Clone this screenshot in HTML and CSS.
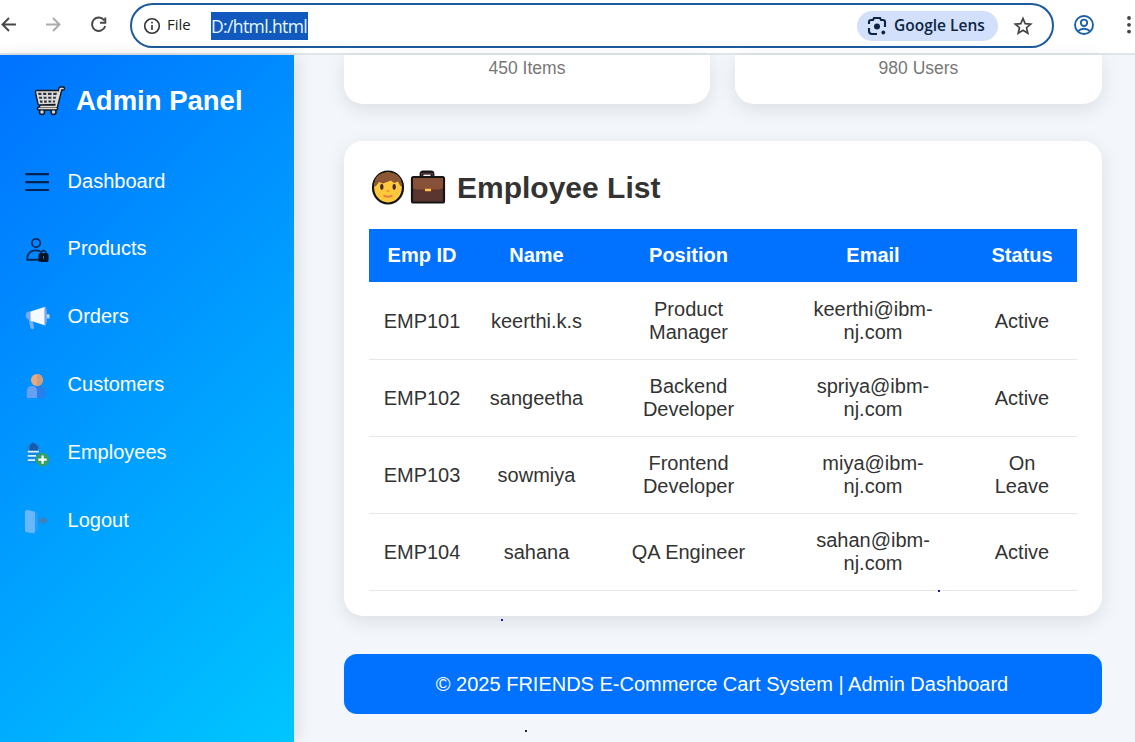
FILE: index.html
```html
<!DOCTYPE html>
<html lang="en">
<head>
<meta charset="utf-8">
<title>Admin Dashboard</title>
<link rel="stylesheet" href="styles.css">
</head>
<body>
<header class="browser">
  <svg class="nav-icons" width="112" height="50" viewBox="0 0 112 50" fill="none" stroke-width="1.9">
    <path d="M16 24.5H2.5M9 18l-6.5 6.5L9 31" stroke="#454749"/>
    <path d="M46 24.5h13.5M53 18l6.500 6.500L53 31" stroke="#a9abad"/>
    <path d="M104.300 20.500A6.700 6.700 0 1 0 105.200 26M105.300 17.500v5.200h-5.300" stroke="#454749"/>
  </svg>
  <div class="address">
    <svg class="info" width="18" height="18" viewBox="0 0 18 18" fill="none" stroke="#303234" stroke-width="1.6"><circle cx="9" cy="9" r="7.300"/><path d="M9 8v5M9 4.800v1.700"/></svg>
    <span class="scheme">File</span>
    <span class="url">D:/html.html</span>
    <div class="lens">
      <svg width="20" height="20" viewBox="0 0 20 20" fill="none" stroke="#0b2545" stroke-width="2.100"><path d="M2 8V6q0-2 2-2h2l1-2h6l1 2h2q2 0 2 2v5M2 12v3q0 3 3 3h5"/><circle cx="10" cy="10.500" r="3" fill="#0b2545" stroke="none"/><circle cx="16.300" cy="16.500" r="1.900" fill="#0b2545" stroke="none"/></svg>
      <span>Google Lens</span>
    </div>
    <svg class="star" width="20" height="20" viewBox="0 0 20 20" fill="none" stroke="#414345" stroke-width="1.700"><path d="m10 2.500 2.200 5.100 5.500.5-4.200 3.600 1.300 5.500L10 14.300l-4.800 2.900 1.300-5.500-4.200-3.600 5.500-.5z"/></svg>
  </div>
  <svg class="profile" width="22" height="22" viewBox="0 0 22 22" fill="none" stroke="#1c61a8" stroke-width="1.900"><circle cx="11" cy="11" r="9"/><circle cx="11" cy="8.800" r="3.200"/><path d="M4.700 17.200q6.300-5 12.600 0"/></svg>
  <svg class="more" width="6" height="20" viewBox="0 0 6 20" fill="#414345"><circle cx="3" cy="3" r="1.900"/><circle cx="3" cy="9.800" r="1.900"/><circle cx="3" cy="16.600" r="1.900"/></svg>
</header>

<div class="page">
  <nav class="sidebar">
    <h1 class="brand">
      <svg width="34" height="34" viewBox="0 0 34 34" fill="none" stroke-linejoin="round" stroke-linecap="round"><g stroke="#111820" stroke-width="4.500"><path d="M30 4.500h-2.500l-4.500 18H8M4 8h21l-2.500 11-16 .5z"/><circle cx="9" cy="28" r="1"/><circle cx="20.500" cy="28" r="1"/><path d="M6 24.500h17"/></g><path d="M4 8h21l-2.500 11-16 .5z" fill="#283742"/><path d="M30 4.500h-2.500l-4.500 18H8M4 8h21l-2.500 11-16 .5zM5 11.800h19M6 15.600h17M9 8l1.500 11M14 8l.7 11M19.500 8l-.5 11M6 24.500h17" stroke="#ded9d7" stroke-width="1.700"/><circle cx="9" cy="28" r="1.800" fill="#d5d0ce"/><circle cx="20.500" cy="28" r="1.800" fill="#d5d0ce"/></svg>
      <span>Admin Panel</span>
    </h1>
    <ul class="menu">
      <li><svg viewBox="0 0 28 28"><path d="M1.500 4.500h25.500M1.500 13h25.500M1.500 21.500h25.500" stroke="#052251" stroke-width="2.300"/></svg><span>Dashboard</span></li>
      <li><svg viewBox="0 0 28 28" fill="none" stroke="#06285b" stroke-width="1.900"><circle cx="13" cy="6.500" r="4.500"/><path d="M16 24.500H3.500V22Q5 14.500 13 14.500q4 0 6 2"/><path d="M18.500 19v-2.500q2.500-3.500 5 0V19"/><rect x="16.500" y="18.500" width="9" height="7.500" rx="1" fill="#071226" stroke="#071226"/><path d="M21 20.500v3" stroke="#4a7097" stroke-width="1"/></svg><span>Products</span></li>
      <li><svg viewBox="0 0 28 28"><path d="M5 15h4l2 10q-2 2-4 0z" fill="#74b0f4"/><path d="M8 7H5q-4 1-3 6 1 3 6 3z" fill="#76a6f5"/><path d="M7 7 23 2v20L7 17z" fill="#f5faff"/><path d="M22 1.500q3 1 3 10.500T22 22z" fill="#72a5ec"/><rect x="24.500" y="10" width="3" height="4.500" rx="1" fill="#b9dcfb"/></svg><span>Orders</span></li>
      <li><svg viewBox="0 0 28 28"><path d="M3 27v-7q0-6 6-6h8q6 0 6 6v7z" fill="#287eed"/><path d="M3 27v-7q0-6 6-6 5 0 5 6v7z" fill="#66a1f1"/><circle cx="14" cy="7.500" r="6.500" fill="#e5aa82"/><path d="M14 1a6.500 6.500 0 0 1 0 13z" fill="#cf9d7d"/></svg><span>Customers</span></li>
      <li><svg viewBox="0 0 28 28"><path d="M3 4h4q2-4 7 0h3v20H3z" fill="#1688e2"/><path d="M6 6q3-8 9 0v5H6z" fill="#175bae"/><path d="M4 11.500h12M4 16h9M4 20.500h8" stroke="#d9f4ff" stroke-width="1.900"/><circle cx="20" cy="20" r="7.300" fill="#32a166"/><path d="M20 15.500v9M15.500 20h9" stroke="#fff" stroke-width="2.400"/></svg><span>Employees</span></li>
      <li><svg viewBox="0 0 28 28"><path d="M3 1h1l8 2v22l-2 1-7-1q-2 0-2-2V3q0-2 2-2z" fill="#68b7fa"/><path d="M12 4h3v19l-3 2z" fill="#249cfa"/><path d="M16 10.500h4V7.500l6 5-6 5v-3h-4z" fill="#3d80bb"/></svg><span>Logout</span></li>
    </ul>
  </nav>

  <main class="content">
    <div class="stats">
      <div class="stat">450 Items</div>
      <div class="stat">980 Users</div>
    </div>
    <section class="employees">
      <h2 class="title">
        <svg width="75" height="36" viewBox="0 0 75 36"><ellipse cx="17" cy="18.500" rx="15" ry="16" fill="#ffc83d" stroke="#151515" stroke-width="2.200"/><path d="M3 17.500Q3 3.500 17 3.500t14 14l-2-1-2-4-4 1.500-3-2.500-8 3-4-1.500-3 4z" fill="#8b5635"/><ellipse cx="10.800" cy="18" rx="1.700" ry="2.900" fill="#402a32"/><ellipse cx="23.200" cy="18" rx="1.700" ry="2.900" fill="#402a32"/><path d="M15.500 22h3" stroke="#e6982c" stroke-width="1.600"/><path d="M12.500 26.500q4.500 2.500 9 0" fill="none" stroke="#e77845" stroke-width="1.800"/><g transform="translate(-1 0)"><path d="M51.500 9V5q0-1.500 1.500-1.500h8q1.500 0 1.500 1.500v4" fill="none" stroke="#151515" stroke-width="3.800"/><path d="M51.500 9V4.500h11V9" fill="none" stroke="#56352e" stroke-width="1.300"/><rect x="42" y="8" width="32" height="25.500" rx="1.500" fill="#5b352f" stroke="#151515" stroke-width="2.200"/><path d="M43 9h30v10q-3 1.500-5 1.500H48q-3 0-5-1.500z" fill="#865039"/><path d="M55 21h6" stroke="#ffc443" stroke-width="2.500"/></g></svg>
        <span>Employee List</span>
      </h2>
      <table class="table">
        <colgroup><col class="col-id"><col class="col-name"><col class="col-position"><col class="col-email"><col class="col-status"></colgroup>
        <thead><tr><th>Emp ID</th><th>Name</th><th>Position</th><th>Email</th><th>Status</th></tr></thead>
        <tbody>
          <tr><td>EMP101</td><td>keerthi.k.s</td><td>Product<br>Manager</td><td>keerthi@ibm-<br>nj.com</td><td>Active</td></tr>
          <tr><td>EMP102</td><td>sangeetha</td><td>Backend<br>Developer</td><td>spriya@ibm-<br>nj.com</td><td>Active</td></tr>
          <tr><td>EMP103</td><td>sowmiya</td><td>Frontend<br>Developer</td><td>miya@ibm-<br>nj.com</td><td>On<br>Leave</td></tr>
          <tr><td>EMP104</td><td>sahana</td><td>QA Engineer</td><td>sahan@ibm-<br>nj.com</td><td>Active</td></tr>
        </tbody>
      </table>
    </section>
    <footer class="footer">© 2025 FRIENDS E-Commerce Cart System | Admin Dashboard</footer>
  </main>
</div>
<i class="speck speck-table"></i><i class="speck speck-card"></i><i class="speck speck-bottom"></i>
</body>
</html>
```
FILE: styles.css
```css
* { box-sizing: border-box; }
body {
  margin: 0;
  height: 742px;
  overflow: hidden;
  display: flex;
  flex-direction: column;
  position: relative;
  background: #f3f6fb;
  color: #333;
  font: 20px/23px "Liberation Sans", Arial, sans-serif;
}
svg { display: block; flex: none; }
.browser {
  height: 55px;
  flex: none;
  display: flex;
  align-items: flex-start;
  background: #fff;
  border-bottom: 2px solid #e0e5e7;
  font-family: "Open Sans", "Noto Sans", sans-serif;
}
.address {
  width: 924px;
  height: 45px;
  margin: 3px 0 0 18px;
  padding: 0 19px 0 12px;
  border: 2px solid #1c5b9c;
  border-radius: 23px;
  display: flex;
  align-items: center;
}
.info { margin-left: -1px; }
.scheme { width: 25px; margin: -2px 0 0 6px; font-size: 15px; font-weight: 500; color: #222; white-space: nowrap; }
.url {
  width: 97px;
  height: 28px;
  margin-left: 19px;
  background: #1159bf;
  color: #e9faff;
  font: 17.500px/28px "Open Sans", sans-serif;
  letter-spacing: -.62px;
  white-space: nowrap;
}
.lens {
  width: 141px;
  height: 30px;
  margin-left: auto;
  padding-left: 10px;
  border-radius: 15px;
  display: flex;
  align-items: center;
  gap: 7px;
  background: #d3e0fc;
  color: #0b2545;
  font-size: 15.500px;
  font-weight: 600;
  white-space: nowrap;
}
.star { margin-left: 15px; }
.profile { margin: 14px 0 0 19px; }
.more { margin: 15px 0 0 31px; }
.page { flex: 1; min-height: 0; display: flex; }
.sidebar {
  width: 294px;
  flex: none;
  padding-top: 29px;
  background: linear-gradient(135deg, #0072ff, #00c6ff);
  box-shadow: 4px 0 15px rgba(0, 0, 0, .1);
  color: #fff;
}
.brand {
  margin: 0;
  padding-left: 33px;
  height: 34px;
  display: flex;
  align-items: center;
  gap: 9px;
  font-size: 27.500px;
  line-height: 32px;
}
.menu { margin: 29px 0 0; padding: 0 0 0 24px; list-style: none; }
.menu li { height: 67.900px; display: flex; align-items: center; gap: 17.600px; }
.menu svg { width: 26px; height: 26px; margin-top: 3px; }
.menu li:first-child { padding-top: 1px; }
.content { flex: 1; padding: 0 33px 0 50px; }
.stats { display: grid; grid-template-columns: 366px 367px; gap: 25px; margin-bottom: 37px; }
.stat {
  height: 49px;
  padding-top: 2px;
  border-radius: 0 0 19px 19px;
  background: #fff;
  box-shadow: 0 5px 19px rgba(0, 0, 0, .1);
  color: #777;
  font-size: 17.500px;
  text-align: center;
}
.employees {
  height: 475px;
  padding: 28px 25px 0;
  border-radius: 19px;
  background: #fff;
  box-shadow: 0 5px 19px rgba(0, 0, 0, .1);
}
.title { height: 36px; margin: 0 0 24px 2px; display: flex; align-items: center; gap: 11px; font-size: 30px; line-height: 36px; }
.title span { padding-top: 1px; }
.table { width: 708px; table-layout: fixed; border-collapse: separate; border-spacing: 0; text-align: center; }
.table th { height: 53px; padding: 15px 0; background: #0072ff; color: #fff; }
.table td { height: 77px; padding: 15px 0; border-bottom: 1px solid #e8e8e8; }
.table tbody tr:first-child td { height: 78px; padding-top: 16px; }
.col-id { width: 106px; }
.col-name { width: 123px; }
.col-position { width: 181px; }
.col-email { width: 188px; }
.col-status { width: 110px; }
.footer {
  height: 60px;
  margin-top: 38px;
  padding-right: 2px;
  border-radius: 13px;
  background: #0072ff;
  color: #fff;
  line-height: 60px;
  text-align: center;
}
.speck { position: absolute; width: 2px; height: 2px; background: #26179b; }
.speck-table { left: 938px; top: 590px; }
.speck-card { left: 501px; top: 619px; }
.speck-bottom { left: 525px; top: 730px; background: #22263d; }
```
